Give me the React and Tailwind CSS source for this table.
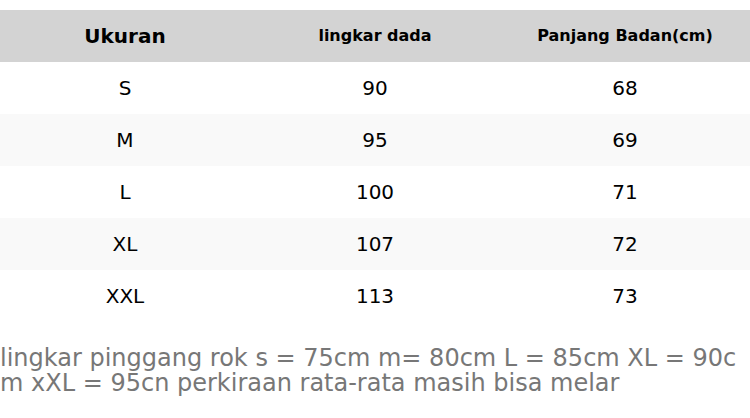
const rows = [
  ["S", "90", "68"],
  ["M", "95", "69"],
  ["L", "100", "71"],
  ["XL", "107", "72"],
  ["XXL", "113", "73"],
];

export default function App() {
  return (
    <div className="bg-white w-[750px] h-[418px] pt-[10px] text-black" style={{ fontFamily: '"DejaVu Sans", sans-serif' }}>
      <table className="w-full table-fixed border-collapse">
        <thead>
          <tr className="bg-[#d3d3d3] h-[52px]">
            <th className="text-[20px] font-bold text-center">Ukuran</th>
            <th className="text-[16px] font-bold text-center">lingkar dada</th>
            <th className="text-[16px] font-bold text-center">Panjang Badan(cm)</th>
          </tr>
        </thead>
        <tbody>
          {rows.map((r, i) => (
            <tr key={i} className={i % 2 === 1 ? "h-[52px] bg-[#f9f9f9]" : "h-[52px] bg-white"}>
              {r.map((c, j) => (
                <td key={j} className="text-center text-[20px] font-normal">{c}</td>
              ))}
            </tr>
          ))}
        </tbody>
      </table>
      <p className="mt-[24px] text-[24px] leading-[25px] text-[#777777] break-all">
        lingkar pinggang rok s = 75cm m= 80cm L = 85cm XL = 90cm xXL = 95cn perkiraan rata-rata masih bisa melar
      </p>
    </div>
  );
}
